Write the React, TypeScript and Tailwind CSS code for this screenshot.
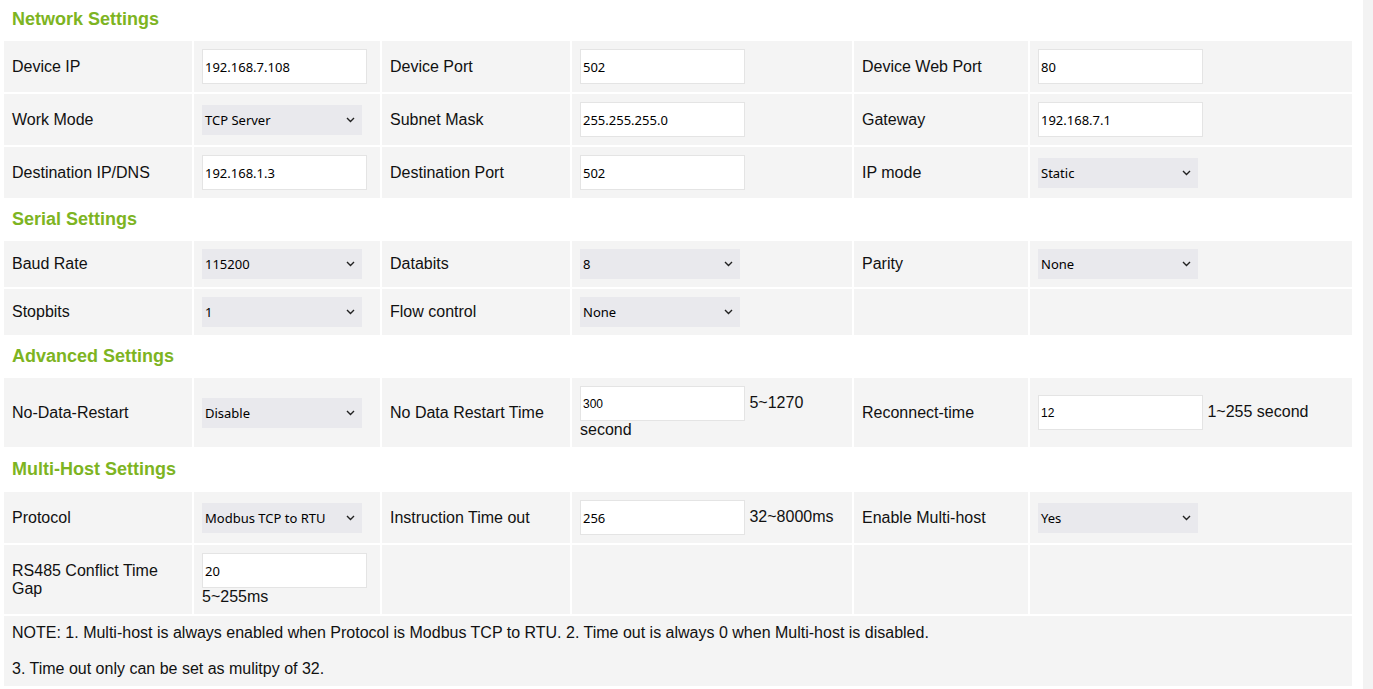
import React from 'react'
import clsx from 'clsx'

type CellProps = { children?: React.ReactNode; className?: string }

const Cell = ({ children, className }: CellProps) => (
  <div className={clsx('flex items-center bg-[#f4f4f4] px-2 py-2 text-[16px] leading-[18px] text-[#111]', className)}>
    {children}
  </div>
)

const Heading = ({ title, className }: { title: string; className?: string }) => (
  <div className={clsx('col-span-6 flex items-center px-2 text-[18px] font-bold text-[#7db422]', className)}>
    {title}
  </div>
)

const TextBox = ({ value, small }: { value: string; small?: boolean }) => (
  <input
    readOnly
    value={value}
    className={clsx(
      'h-[35px] w-[165px] border border-[#e4e4e4] bg-white px-[2px] align-middle text-black outline-none',
      small ? "font-['Liberation_Sans',sans-serif] text-[12px]" : "font-['Noto_Sans',sans-serif] text-[13px]"
    )}
  />
)

const Select = ({ value }: { value: string }) => (
  <div className="flex h-[30px] w-[160px] items-center justify-between bg-[#e9e9ed] pl-[3px] pr-[7px] font-['Noto_Sans',sans-serif] text-[13px] text-black">
    <span>{value}</span>
    <svg width="9" height="6" viewBox="0 0 9 6" fill="none">
      <path d="M1 1l3.5 3.5L8 1" stroke="#222" strokeWidth="1.4" />
    </svg>
  </div>
)

export default function App() {
  return (
    <div className="flex min-h-[689px] bg-white font-['Liberation_Sans',Arial,sans-serif]">
      <div className="w-[1363px] pl-[4px] pr-[11px]">
        <div className="grid grid-cols-[188px_186px_188px_280px_174px_1fr] gap-[2px]">
          <Heading title="Network Settings" className="h-[39px]" />

          <Cell>Device IP</Cell>
          <Cell><TextBox value="192.168.7.108" /></Cell>
          <Cell>Device Port</Cell>
          <Cell><TextBox value="502" /></Cell>
          <Cell>Device Web Port</Cell>
          <Cell><TextBox value="80" /></Cell>

          <Cell>Work Mode</Cell>
          <Cell><Select value="TCP Server" /></Cell>
          <Cell>Subnet Mask</Cell>
          <Cell><TextBox value="255.255.255.0" /></Cell>
          <Cell>Gateway</Cell>
          <Cell><TextBox value="192.168.7.1" /></Cell>

          <Cell>Destination IP/DNS</Cell>
          <Cell><TextBox value="192.168.1.3" /></Cell>
          <Cell>Destination Port</Cell>
          <Cell><TextBox value="502" /></Cell>
          <Cell>IP mode</Cell>
          <Cell><Select value="Static" /></Cell>

          <Heading title="Serial Settings" className="h-[39px]" />

          <Cell>Baud Rate</Cell>
          <Cell><Select value="115200" /></Cell>
          <Cell>Databits</Cell>
          <Cell><Select value="8" /></Cell>
          <Cell>Parity</Cell>
          <Cell><Select value="None" /></Cell>

          <Cell>Stopbits</Cell>
          <Cell><Select value="1" /></Cell>
          <Cell>Flow control</Cell>
          <Cell><Select value="None" /></Cell>
          <Cell />
          <Cell />

          <Heading title="Advanced Settings" className="h-[39px]" />

          <Cell>No-Data-Restart</Cell>
          <Cell><Select value="Disable" /></Cell>
          <Cell>No Data Restart Time</Cell>
          <Cell>
            <div>
              <TextBox value="300" small /> 5~1270 second
            </div>
          </Cell>
          <Cell>Reconnect-time</Cell>
          <Cell>
            <div>
              <TextBox value="12" small /> 1~255 second
            </div>
          </Cell>

          <Heading title="Multi-Host Settings" className="h-[41px]" />

          <Cell>Protocol</Cell>
          <Cell><Select value="Modbus TCP to RTU" /></Cell>
          <Cell>Instruction Time out</Cell>
          <Cell>
            <div>
              <TextBox value="256" /> 32~8000ms
            </div>
          </Cell>
          <Cell>Enable Multi-host</Cell>
          <Cell><Select value="Yes" /></Cell>

          <Cell>RS485 Conflict Time Gap</Cell>
          <Cell>
            <div>
              <TextBox value="20" /> 5~255ms
            </div>
          </Cell>
          <Cell />
          <Cell />
          <Cell />
          <Cell />

          <div className="col-span-6 bg-[#f4f4f4] px-2 py-2 text-[16px] leading-[18px] text-[#111]">
            NOTE: 1. Multi-host is always enabled when Protocol is Modbus TCP to RTU. 2. Time out is always 0 when Multi-host is disabled.
            <br />
            <br />
            3. Time out only can be set as mulitpy of 32.
          </div>
        </div>
      </div>
      <div className="w-[10px] bg-[#f3f3f3]" />
    </div>
  )
}
